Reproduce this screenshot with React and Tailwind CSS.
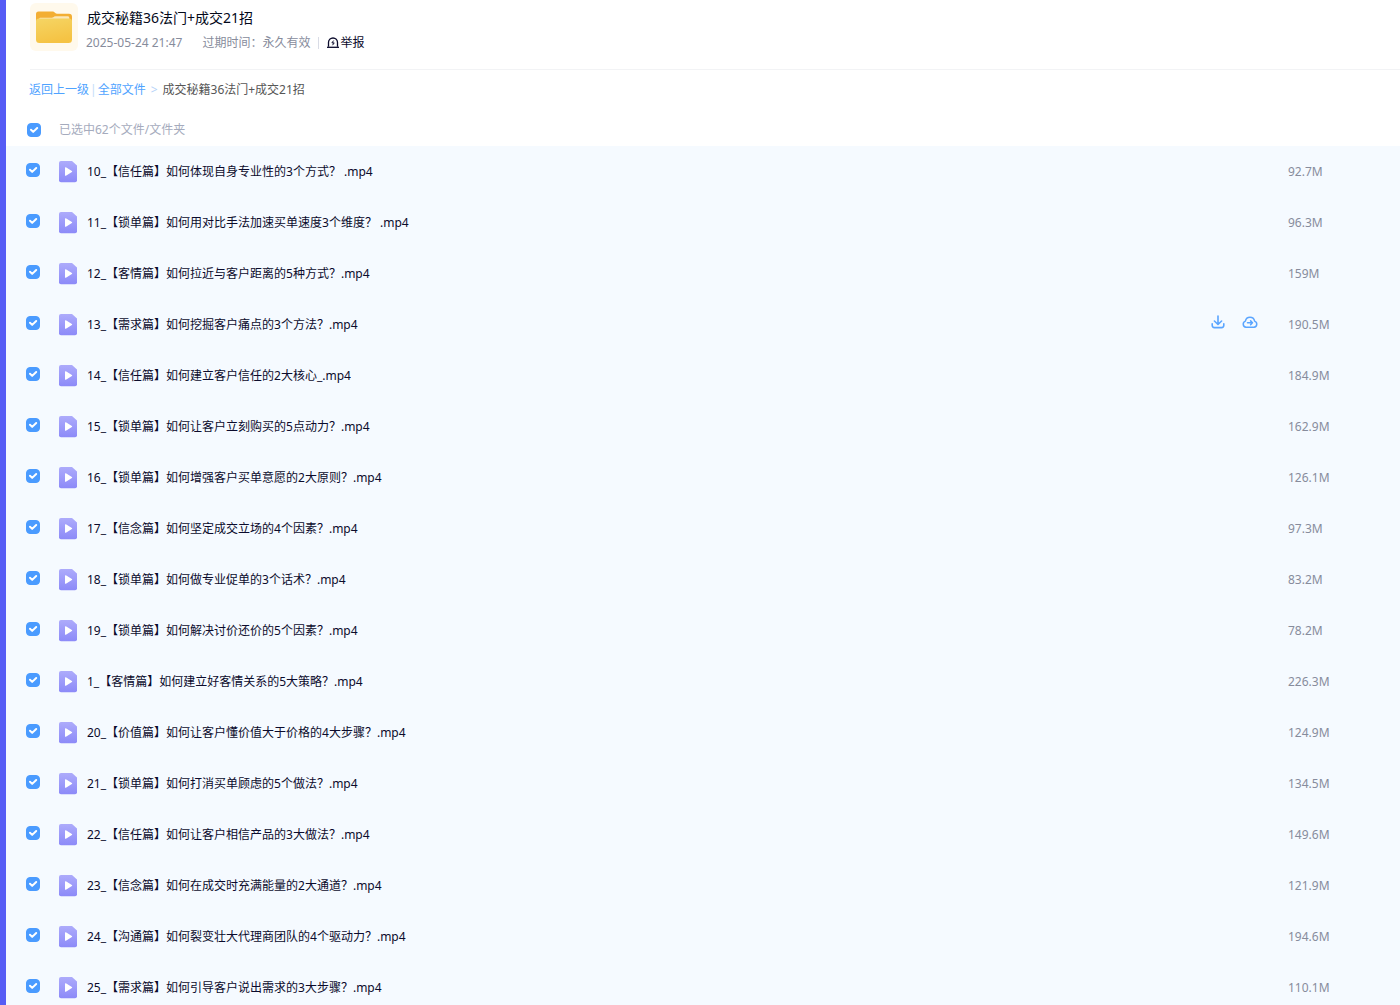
const files = [
  { name: '10_【信任篇】如何体现自身专业性的3个方式？ .mp4', size: '92.7M' },
  { name: '11_【锁单篇】如何用对比手法加速买单速度3个维度？ .mp4', size: '96.3M' },
  { name: '12_【客情篇】如何拉近与客户距离的5种方式？.mp4', size: '159M' },
  { name: '13_【需求篇】如何挖掘客户痛点的3个方法？.mp4', size: '190.5M', active: true },
  { name: '14_【信任篇】如何建立客户信任的2大核心_.mp4', size: '184.9M' },
  { name: '15_【锁单篇】如何让客户立刻购买的5点动力？.mp4', size: '162.9M' },
  { name: '16_【锁单篇】如何增强客户买单意愿的2大原则？.mp4', size: '126.1M' },
  { name: '17_【信念篇】如何坚定成交立场的4个因素？.mp4', size: '97.3M' },
  { name: '18_【锁单篇】如何做专业促单的3个话术？.mp4', size: '83.2M' },
  { name: '19_【锁单篇】如何解决讨价还价的5个因素？.mp4', size: '78.2M' },
  { name: '1_【客情篇】如何建立好客情关系的5大策略？.mp4', size: '226.3M' },
  { name: '20_【价值篇】如何让客户懂价值大于价格的4大步骤？.mp4', size: '124.9M' },
  { name: '21_【锁单篇】如何打消买单顾虑的5个做法？.mp4', size: '134.5M' },
  { name: '22_【信任篇】如何让客户相信产品的3大做法？.mp4', size: '149.6M' },
  { name: '23_【信念篇】如何在成交时充满能量的2大通道？.mp4', size: '121.9M' },
  { name: '24_【沟通篇】如何裂变壮大代理商团队的4个驱动力？.mp4', size: '194.6M' },
  { name: '25_【需求篇】如何引导客户说出需求的3大步骤？.mp4', size: '110.1M' },
]

function FolderIcon() {
  return (
    <svg viewBox="0 0 36 32" className="h-8 w-9" aria-hidden="true">
      <defs>
        <linearGradient id="folder-front" x1="0" y1="0" x2="0.3" y2="1">
          <stop offset="0" stopColor="#f5d564" />
          <stop offset="1" stopColor="#f5c344" />
        </linearGradient>
      </defs>
      <path d="M0 3a2.500 2.500 0 0 1 2.500-2.500h13.500c1.500 0 2.200.5 3 1.200.8.700 1.500 1.100 2.700 1.100H33a3 3 0 0 1 3 3V14H0z" fill="#f3ae33" />
      <path d="M3 8.500c0-1.200.7-1.800 1.700-1.800H15c1.500 0 2-.3 2.800-.8.700-.4 1.300-.6 2.500-.6h11.200c1.200 0 1.800.6 1.800 1.700v1.500z" fill="#fbe7b8" />
      <path d="M0 10.500A3 3 0 0 1 3 7.500h30a3 3 0 0 1 3 3v18a3.500 3.500 0 0 1-3.500 3.500h-29A3.500 3.500 0 0 1 0 28.500z" fill="url(#folder-front)" />
    </svg>
  )
}

function VideoIcon() {
  return (
    <svg viewBox="0 0 18 22" className="h-[22px] w-[18px] shrink-0" aria-hidden="true">
      <defs>
        <linearGradient id="video-page" x1="0" y1="0" x2="0" y2="1">
          <stop offset="0" stopColor="#adabfb" />
          <stop offset="1" stopColor="#8c8af8" />
        </linearGradient>
      </defs>
      <path d="M2 0h11l5 4.500v14.800a2 2 0 0 1-2 2H2a2 2 0 0 1-2-2V2a2 2 0 0 1 2-2z" fill="url(#video-page)" />
      <path d="M6 6.800v7.400c0 .5.500.8.900.5l6-3.600c.4-.3.400-.9 0-1.100l-6-3.700c-.4-.3-.9 0-.9.500z" fill="#fff" />
    </svg>
  )
}

function ReportIcon() {
  return (
    <svg viewBox="0 0 12 12" className="size-3" fill="none" stroke="#0b0b2c" aria-hidden="true">
      <path d="M1.500 9.800V5.500a4.500 4.500 0 0 1 9 0v4.300" strokeWidth="1.300" />
      <path d="M0 10.300h12" strokeWidth="1.300" />
      <path d="M6.600 3.600 4.900 5.900h2.300L5.500 8.200" strokeWidth="1" />
    </svg>
  )
}

function DownloadIcon() {
  return (
    <svg viewBox="0 0 14 14" className="size-3.5" fill="none" stroke="#5aa5ff" strokeWidth="1.600" strokeLinecap="round" strokeLinejoin="round" aria-hidden="true">
      <path d="M7 1v8M3.400 6l3.600 3.500L10.600 6" />
      <path d="M1.200 8.800v1.500a2.300 2.300 0 0 0 2.300 2.300h7a2.300 2.300 0 0 0 2.300-2.300V8.800" />
    </svg>
  )
}

function CloudSaveIcon() {
  return (
    <svg viewBox="0 0 16 14" className="h-3.5 w-4" fill="none" stroke="#5aa5ff" strokeWidth="1.500" strokeLinecap="round" strokeLinejoin="round" aria-hidden="true">
      <path d="M4 12.300a3.200 3.200 0 0 1-.6-6.200 4.700 4.700 0 0 1 9.200 0 3.200 3.200 0 0 1-.6 6.200z" />
      <path d="M5.500 7.800h5M8.600 5.900l1.900 1.900-1.900 1.900" />
    </svg>
  )
}

function Checkbox({ id }) {
  return (
    <span className="grid size-3.5 shrink-0">
      <input
        id={id}
        type="checkbox"
        defaultChecked
        className="peer col-start-1 row-start-1 size-3.5 appearance-none rounded-[4px] border border-gray-300 checked:border-[#4a9bff] checked:bg-[#4a9bff]"
      />
      <svg viewBox="0 0 14 14" className="pointer-events-none invisible col-start-1 row-start-1 size-3.5 peer-checked:visible" fill="none" stroke="#fff" strokeWidth="2" strokeLinecap="round" strokeLinejoin="round" aria-hidden="true">
        <path d="m4 6.700 2.200 2.200L10.200 5" />
      </svg>
    </span>
  )
}

function FileRow({ file, index }) {
  return (
    <li className="flex h-[51px] items-center bg-[#f5faff] pl-5">
      <div className="pb-1">
        <Checkbox id={`file-${index}`} />
      </div>
      <label htmlFor={`file-${index}`} className="ml-[19px] flex min-w-0 flex-1 items-center gap-2.5 text-[#0b0b2c]">
        <VideoIcon />
        <span className="truncate">{file.name}</span>
      </label>
      {file.active && (
        <div className="mr-[30px] flex items-center gap-[17px] pb-1.5">
          <button type="button" aria-label="下载">
            <DownloadIcon />
          </button>
          <button type="button" aria-label="保存到网盘">
            <CloudSaveIcon />
          </button>
        </div>
      )}
      <span className="w-28 text-[#878c9c]">{file.size}</span>
    </li>
  )
}

export default function App() {
  return (
    <div className="flex h-screen overflow-hidden bg-white font-['Noto_Sans','Noto_Sans_CJK_SC',sans-serif] text-xs">
      <div className="w-1.5 shrink-0 bg-[#565cf5]" />
      <main className="min-w-0 flex-1">
        <header className="ml-6 flex h-[70px] gap-2 border-b border-[#f2f3f5] pt-[3px]">
          <div className="flex size-12 items-center justify-center rounded-md bg-[#fff9ec]">
            <FolderIcon />
          </div>
          <div className="pt-1">
            <h1 className="pl-px text-sm leading-[22px] text-[#03081a]">成交秘籍36法门+成交21招</h1>
            <div className="mt-1 flex h-5 items-center text-[#878c9c]">
              <span>2025-05-24 21:47</span>
              <span className="ml-5">过期时间：永久有效</span>
              <span className="mx-2 h-3 w-px bg-[#d9dce6]" />
              <button type="button" className="flex items-center gap-px text-[#0b0b2c]">
                <ReportIcon />
                举报
              </button>
            </div>
          </div>
        </header>

        <nav className="flex h-10 items-center pl-[23px] text-[#565656]">
          <a href="#" className="text-[#4fa3ff]">返回上一级</a>
          <span className="mx-px text-[#c4dcf8]">|</span>
          <a href="#" className="text-[#4fa3ff]">全部文件</a>
          <span className="mx-[5px] text-[#b4d3f8]">&gt;</span>
          <span>成交秘籍36法门+成交21招</span>
        </nav>

        <div className="flex h-9 items-center pt-[3px] pl-[21px]">
          <Checkbox id="select-all" />
          <label htmlFor="select-all" className="ml-[18px] text-[#a5abbd]">已选中62个文件/文件夹</label>
        </div>

        <ul>
          {files.map((file, index) => (
            <FileRow key={file.name} file={file} index={index} />
          ))}
        </ul>
      </main>
    </div>
  )
}
